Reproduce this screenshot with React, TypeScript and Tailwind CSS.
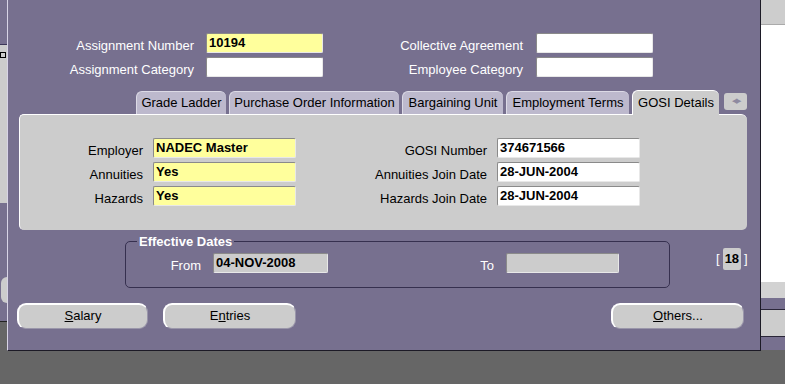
const FONT = { fontFamily: '"Liberation Sans", Arial, sans-serif' };

const Field = ({ value, w, tone = "white" }: { value?: string; w: string; tone?: "white" | "yellow" | "gray" }) => {
  const bg = tone === "yellow" ? "bg-[#ffff9c]" : tone === "gray" ? "bg-[#cccccc]" : "bg-white";
  return (
    <div
      className={`${w} ${bg} h-[20px] rounded-[2px] border-t border-l border-[#8a8a8a] border-r border-b border-r-[#e8e8e8] border-b-[#e8e8e8] flex items-center pl-[2px] pb-[1px] text-[13px] font-bold text-black leading-none`}
    >
      {value}
    </div>
  );
};

// labels sit a little below the field text, as in the form
const lbl = "h-[20px] pt-[6px] leading-none text-right text-[13px]";

const Tab = ({ label, w, active }: { label: string; w: string; active?: boolean }) => (
  <div
    className={`${w} ${
      active
        ? "h-[25px] bg-[#cccccc] border-t border-l border-white -mb-[1px] z-10"
        : "h-[23px] bg-[#bdb9cd] border-t border-l border-[#dcdae6]"
    } rounded-t-[6px] flex items-center justify-center text-[13px] text-black`}
  >
    {label}
  </div>
);

const Btn = ({ children, w }: { children: React.ReactNode; w: string }) => (
  <div
    className={`${w} h-[26px] rounded-[9px] bg-[#cccccc] border-t-2 border-l-2 border-white border-b border-r border-b-[#9a96aa] border-r-[#9a96aa] flex items-center justify-center pb-[2px] text-[13px] text-black`}
  >
    {children}
  </div>
);

export default function App() {
  return (
    <div className="w-[785px] h-[384px] bg-[#666666] flex overflow-hidden" style={FONT}>
      {/* left: window behind */}
      <div className="w-[7px] h-[322px] flex flex-col border-b border-[#222]">
        <div className="h-[45px] bg-[#77708f] border-b border-[#3c3658]" />
        <div className="h-[158px] bg-[#cccccc] pt-[7px]">
          <div className="h-[6px] w-[6px] border border-black" />
        </div>
        <div className="flex-1 bg-[#77708f] flex flex-col justify-center">
          <div className="h-[26px] w-[6px] ml-[1px] rounded-l-[8px] bg-[#cccccc] mt-[56px]" />
        </div>
      </div>

      {/* main window */}
      <div className="w-[754px] h-[351px] bg-[#77708f] border-l border-[#d8d4e6] border-r border-b border-r-[#1c1a26] border-b-[#1c1a26] flex flex-col">
        {/* header fields */}
        <div className="mt-[33px] flex flex-col gap-[4px]">
          <div className="flex items-center">
            <div className={`w-[186px] text-white ${lbl}`}>Assignment Number</div>
            <div className="ml-[12px]"><Field value="10194" w="w-[117px]" tone="yellow" /></div>
            <div className={`w-[200px] text-white ${lbl}`}>Collective Agreement</div>
            <div className="ml-[13px]"><Field w="w-[117px]" /></div>
          </div>
          <div className="flex items-center">
            <div className={`w-[186px] text-white ${lbl}`}>Assignment Category</div>
            <div className="ml-[12px]"><Field w="w-[117px]" /></div>
            <div className={`w-[200px] text-white ${lbl}`}>Employee Category</div>
            <div className="ml-[13px]"><Field w="w-[117px]" /></div>
          </div>
        </div>

        {/* tabs */}
        <div className="mt-[13px] ml-[128px] flex items-end gap-[3px] h-[24px]">
          <Tab label="Grade Ladder" w="w-[90px]" />
          <Tab label="Purchase Order Information" w="w-[170px]" />
          <Tab label="Bargaining Unit" w="w-[101px]" />
          <Tab label="Employment Terms" w="w-[123px]" />
          <Tab label="GOSI Details" w="w-[87px]" active />
          <div className="self-start mt-[3px] ml-[2px] w-[23px] h-[17px] rounded-[3px] bg-[#cccccc] flex items-center justify-center text-[7px] text-[#8e8aa0] tracking-[-1px]">
            ◀▶
          </div>
        </div>

        {/* tab panel */}
        <div className="ml-[11px] w-[728px] h-[116px] bg-[#cccccc] rounded-[5px] rounded-tr-[6px] border-t border-l border-white pt-[23px] flex flex-col gap-[4px]">
          {[
            ["Employer", "NADEC Master", "GOSI Number", "374671566"],
            ["Annuities", "Yes", "Annuities Join Date", "28-JUN-2004"],
            ["Hazards", "Yes", "Hazards Join Date", "28-JUN-2004"],
          ].map(([l1, v1, l2, v2]) => (
            <div key={l1} className="flex items-center">
              <div className={`w-[123px] text-black ${lbl}`}>{l1}</div>
              <div className="ml-[10px]"><Field value={v1} w="w-[143px]" tone="yellow" /></div>
              <div className={`w-[191px] text-black ${lbl}`}>{l2}</div>
              <div className="ml-[10px]"><Field value={v2} w="w-[143px]" /></div>
            </div>
          ))}
        </div>

        {/* effective dates */}
        <div className="mt-[4px] flex items-start">
          <fieldset className="ml-[117px] w-[545px] h-[54px] border border-[#36304f] rounded-[5px] px-[11px]">
            <legend className="px-[2px] text-[13px] font-bold text-white leading-[15px]">Effective Dates</legend>
            <div className="flex items-center mt-[4px]">
              <div className={`w-[64px] text-white ${lbl}`}>From</div>
              <div className="ml-[12px]"><Field value="04-NOV-2008" w="w-[115px]" tone="gray" /></div>
              <div className={`w-[166px] text-white ${lbl}`}>To</div>
              <div className="ml-[12px]"><Field w="w-[113px]" tone="gray" /></div>
            </div>
          </fieldset>
          <div className="ml-[46px] mt-[14px] flex items-center gap-[3px] text-[13px] text-white">
            <span>[</span>
            <span className="h-[22px] px-[2px] bg-[#cccccc] rounded-[2px] flex items-center font-bold text-black">18</span>
            <span>]</span>
          </div>
        </div>

        {/* buttons */}
        <div className="mt-[15px] ml-[9px] flex">
          <Btn w="w-[131px]"><span><u>S</u>alary</span></Btn>
          <div className="ml-[15px]"><Btn w="w-[133px]"><span>E<u>n</u>tries</span></Btn></div>
          <div className="ml-[315px]"><Btn w="w-[133px]"><span><u>O</u>thers...</span></Btn></div>
        </div>
      </div>

      {/* right: window behind */}
      <div className="w-[24px] h-[350px] flex flex-col">
        <div className="h-[25px] bg-[#cdcdcd] border-b border-[#aaa]" />
        <div className="h-[257px] bg-white" />
        <div className="h-[16px] bg-[#d2d2d2]" />
        <div className="h-[12px] bg-[#77708f] border-b border-[#2a2638]" />
        <div className="h-[27px] bg-[#cdcdcd] border-b border-[#2a2638]" />
        <div className="flex-1 bg-[#77708f]" />
      </div>
    </div>
  );
}
